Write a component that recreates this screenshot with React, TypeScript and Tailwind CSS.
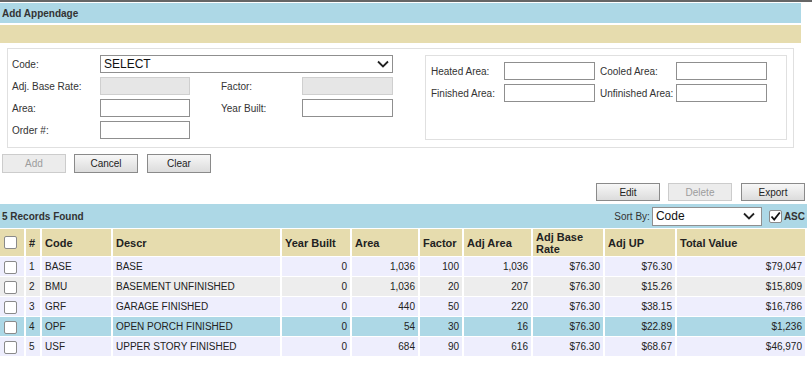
import React from 'react';

const rows = [
  { n: 1, code: 'BASE', descr: 'BASE', year: '0', area: '1,036', factor: '100', adjArea: '1,036', rate: '$76.30', up: '$76.30', total: '$79,047', bg: 'bg-[#eeeefd]' },
  { n: 2, code: 'BMU', descr: 'BASEMENT UNFINISHED', year: '0', area: '1,036', factor: '20', adjArea: '207', rate: '$76.30', up: '$15.26', total: '$15,809', bg: 'bg-[#ededed]' },
  { n: 3, code: 'GRF', descr: 'GARAGE FINISHED', year: '0', area: '440', factor: '50', adjArea: '220', rate: '$76.30', up: '$38.15', total: '$16,786', bg: 'bg-[#eeeefd]' },
  { n: 4, code: 'OPF', descr: 'OPEN PORCH FINISHED', year: '0', area: '54', factor: '30', adjArea: '16', rate: '$76.30', up: '$22.89', total: '$1,236', bg: 'bg-[#add8e6]' },
  { n: 5, code: 'USF', descr: 'UPPER STORY FINISHED', year: '0', area: '684', factor: '90', adjArea: '616', rate: '$76.30', up: '$68.67', total: '$46,970', bg: 'bg-[#eeeefd]' },
];

function Chevron() {
  return (
    <svg width="12" height="8" viewBox="0 0 12 8" className="shrink-0">
      <path d="M1 1.5 L6 6.5 L11 1.5" fill="none" stroke="#222" strokeWidth="1.8" />
    </svg>
  );
}

function Box({ checked }: { checked?: boolean }) {
  return (
    <span className="inline-flex w-[13px] h-[13px] border border-[#8a8a8a] rounded-[2px] bg-white items-center justify-center align-middle">
      {checked && (
        <svg width="11" height="11" viewBox="0 0 11 11">
          <path d="M1.5 5.5 L4.2 8.5 L9.8 1.5" fill="none" stroke="#111" strokeWidth="1.8" />
        </svg>
      )}
    </span>
  );
}

function Input({ w, disabled }: { w: string; disabled?: boolean }) {
  return (
    <div
      className={
        w +
        ' h-[18px] border ' +
        (disabled ? 'bg-[#e6e6e6] border-[#cfcfcf]' : 'bg-white border-[#8f8f8f]')
      }
    />
  );
}

function Btn({ label, disabled, h = 'h-[19px]' }: { label: string; disabled?: boolean; h?: string }) {
  return (
    <div
      className={
        'w-[64px] ' +
        h +
        ' flex items-center justify-center text-[10px] border ' +
        (disabled
          ? 'border-[#cccccc] bg-[#ececec] text-[#9c9c9c]'
          : 'border-[#8a8a8a] bg-gradient-to-b from-[#f7f7f7] to-[#dcdcdc] text-[#222]')
      }
    >
      {label}
    </div>
  );
}

export default function App() {
  const td = 'border-r-2 border-b border-white px-[3px] h-[20px] text-[10px] text-[#222] whitespace-nowrap';
  const th = 'border-r-2 border-b border-white px-[3px] h-[28px] text-[11px] font-bold text-[#222] text-left leading-[12px]';

  return (
    <div className="w-[812px] h-[368px] bg-white overflow-hidden font-['Liberation_Sans',Arial,sans-serif] text-[#333]">
      <div className="h-[2px] bg-[#666666]" />
      <div className="mt-px w-[801px] h-[20px] bg-[#add8e6] flex items-center px-[2px] text-[10px] font-bold text-[#333]">
        Add Appendage
      </div>
      <div className="mt-[2px] w-[801px] h-[18px] bg-[#e6dcae]" />

      {/* form */}
      <div className="ml-[7px] mt-[5px] w-[787px] h-[100px] border border-[#e0e0e0] flex pt-[6px] pl-[4px] text-[10px]">
        <div className="w-[381px] flex flex-col gap-[4px]">
          <div className="flex items-center">
            <div className="w-[88px]">Code:</div>
            <div className="w-[293px] h-[18px] border border-[#8f8f8f] bg-white flex items-center justify-between pl-[3px] pr-[3px] text-[12px] text-[#111]">
              SELECT
              <Chevron />
            </div>
          </div>
          <div className="flex items-center">
            <div className="w-[88px]">Adj. Base Rate:</div>
            <Input w="w-[90px]" disabled />
            <div className="w-[112px] pl-[31px]">Factor:</div>
            <Input w="w-[91px]" disabled />
          </div>
          <div className="flex items-center">
            <div className="w-[88px]">Area:</div>
            <Input w="w-[90px]" />
            <div className="w-[112px] pl-[31px]">Year Built:</div>
            <Input w="w-[91px]" />
          </div>
          <div className="flex items-center">
            <div className="w-[88px]">Order #:</div>
            <Input w="w-[90px]" />
          </div>
        </div>

        <div className="ml-[32px] w-[362px] h-[85px] border border-[#e0e0e0] pt-[6px] pl-[5px] flex flex-col gap-[4px]">
          <div className="flex items-center">
            <div className="w-[73px]">Heated Area:</div>
            <Input w="w-[91px]" />
            <div className="w-[81px] pl-[5px]">Cooled Area:</div>
            <Input w="w-[91px]" />
          </div>
          <div className="flex items-center">
            <div className="w-[73px]">Finished Area:</div>
            <Input w="w-[91px]" />
            <div className="w-[81px] pl-[5px]">Unfinished Area:</div>
            <Input w="w-[91px]" />
          </div>
        </div>
      </div>

      <div className="mt-[6px] ml-[2px] flex gap-[8px]">
        <Btn label="Add" disabled />
        <Btn label="Cancel" />
        <div className="ml-px">
          <Btn label="Clear" />
        </div>
      </div>

      <div className="mt-[10px] pr-[7px] flex justify-end gap-[8px]">
        <Btn label="Edit" h="h-[18px]" />
        <Btn label="Delete" disabled h="h-[18px]" />
        <div className="ml-px">
          <Btn label="Export" h="h-[18px]" />
        </div>
      </div>

      {/* records bar */}
      <div className="mt-[3px] w-[807px] h-[24px] bg-[#add8e6] flex items-center justify-between pl-[2px] pr-[2px] text-[10px]">
        <div className="font-bold text-[#333]">5 Records Found</div>
        <div className="flex items-center">
          <span className="mr-[2px] text-[#333]">Sort By:</span>
          <div className="w-[110px] h-[19px] border border-[#8f8f8f] bg-white flex items-center justify-between pl-[3px] pr-[6px] text-[12px] text-[#111]">
            Code
            <Chevron />
          </div>
          <span className="ml-[7px]">
            <Box checked />
          </span>
          <span className="ml-[2px] font-bold text-[#333]">ASC</span>
        </div>
      </div>

      <table className="mt-px w-[807px] table-fixed border-separate border-spacing-0">
        <colgroup>
          <col className="w-[26px]" />
          <col className="w-[16px]" />
          <col className="w-[71px]" />
          <col className="w-[169px]" />
          <col className="w-[70px]" />
          <col className="w-[68px]" />
          <col className="w-[44px]" />
          <col className="w-[69px]" />
          <col className="w-[72px]" />
          <col className="w-[72px]" />
          <col className="w-[130px]" />
        </colgroup>
        <thead>
          <tr className="bg-[#e6dcae]">
            <th className={th + ' pl-[4px]'}>
              <Box />
            </th>
            <th className={th + ' px-[1px]'}>#</th>
            <th className={th}>Code</th>
            <th className={th}>Descr</th>
            <th className={th}>Year Built</th>
            <th className={th}>Area</th>
            <th className={th}>Factor</th>
            <th className={th}>Adj Area</th>
            <th className={th}>Adj Base Rate</th>
            <th className={th}>Adj UP</th>
            <th className={th + ' border-r-0'}>Total Value</th>
          </tr>
        </thead>
        <tbody>
          {rows.map((r) => (
            <tr key={r.n} className={r.bg}>
              <td className={td + ' pl-[4px]'}>
                <Box />
              </td>
              <td className={td + ' px-[1px]'}>{r.n}</td>
              <td className={td}>{r.code}</td>
              <td className={td}>{r.descr}</td>
              <td className={td + ' text-right'}>{r.year}</td>
              <td className={td + ' text-right'}>{r.area}</td>
              <td className={td + ' text-right'}>{r.factor}</td>
              <td className={td + ' text-right'}>{r.adjArea}</td>
              <td className={td + ' text-right'}>{r.rate}</td>
              <td className={td + ' text-right'}>{r.up}</td>
              <td className={td + ' text-right border-r-0'}>{r.total}</td>
            </tr>
          ))}
        </tbody>
      </table>
    </div>
  );
}
